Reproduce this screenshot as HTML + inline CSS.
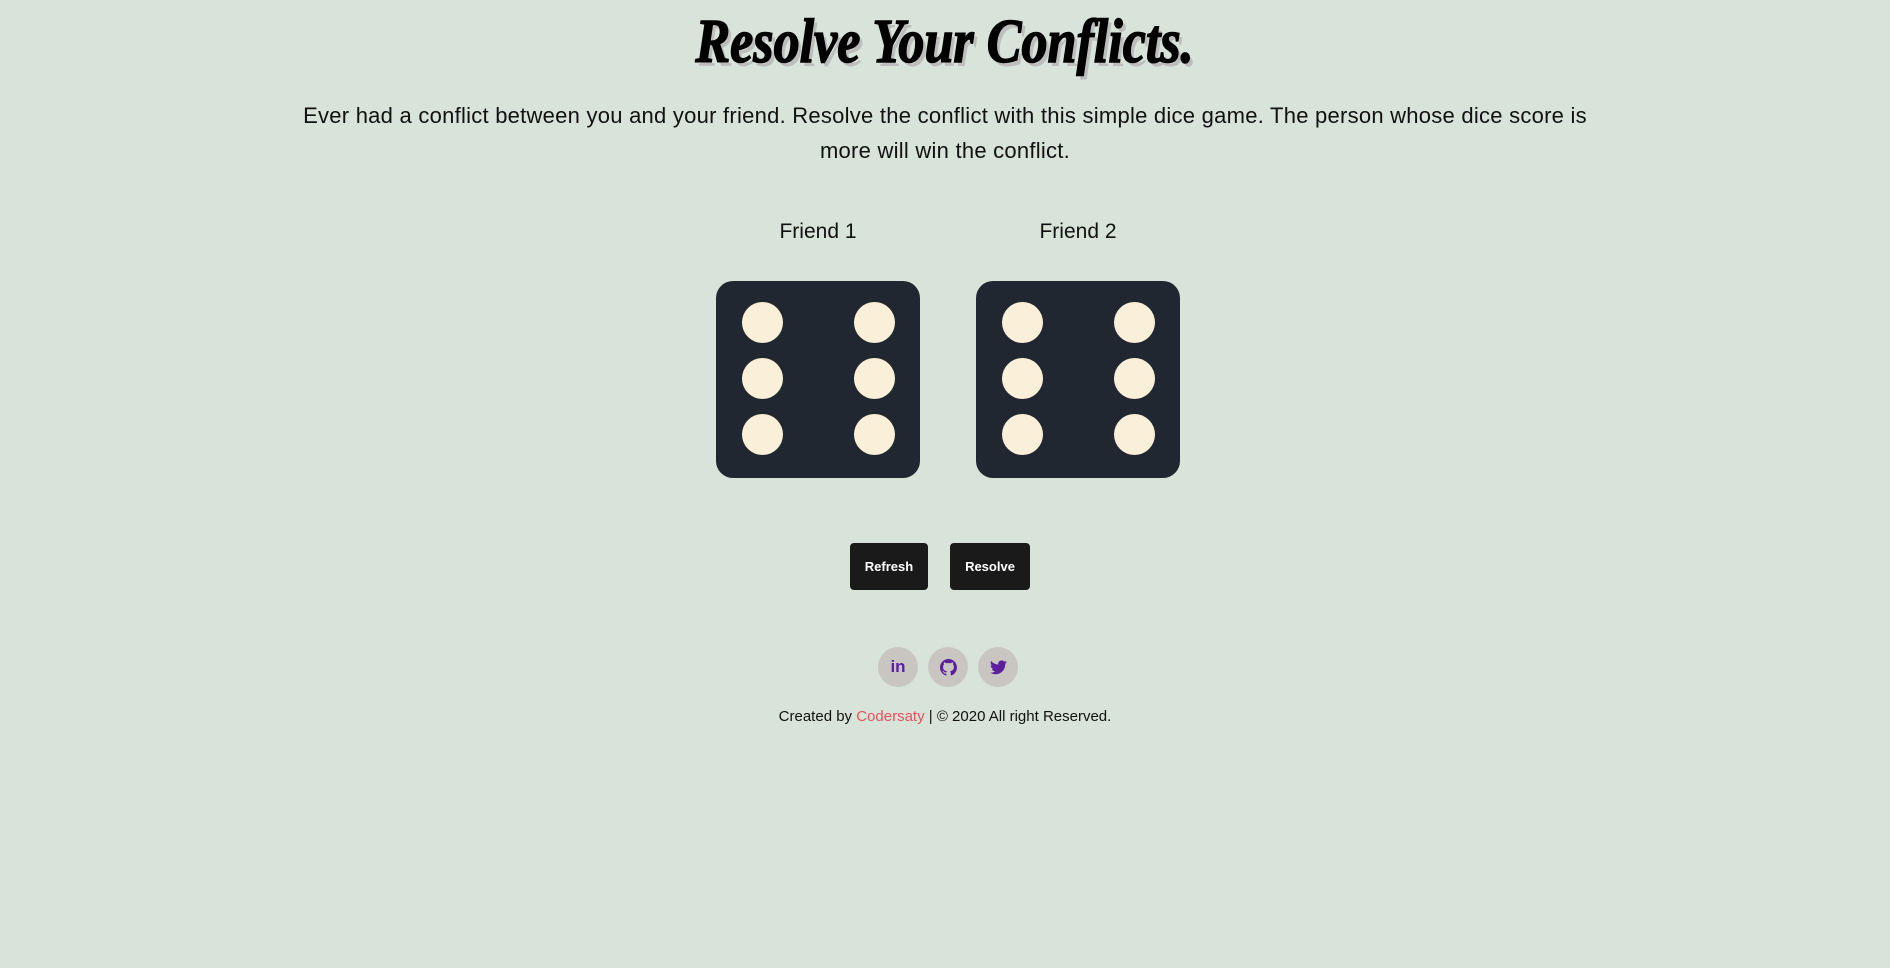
<!DOCTYPE html>
<html><head><meta charset="utf-8"><style>
body{margin:0;width:1890px;height:968px;background:#d8e3da;position:relative;overflow:hidden;font-family:"Liberation Sans",sans-serif;color:#111}
.abs{position:absolute}
h1{position:absolute;left:0;width:1890px;top:2px;margin:0;text-align:center;font-family:"Liberation Serif",serif;font-style:italic;font-weight:bold;font-size:62px;line-height:80px;color:#000;text-shadow:4px 4px 0 #bdbdbd;-webkit-text-stroke:1.5px #000}
h1 span{display:inline-block;transform:scaleX(0.84)}
.p{left:297px;width:1296px;top:98px;text-align:center;font-size:22px;line-height:35px;font-weight:300;letter-spacing:0.25px}
.lab{top:220px;width:200px;text-align:center;font-size:21px}
.die{top:281px;width:204px;height:197px;background:#212730;border-radius:17px}
.dot{position:absolute;width:41px;height:41px;border-radius:50%;background:#faefd8}
.btn{top:543px;height:47px;background:#1a1a1a;border-radius:4px;color:#fff;font-weight:bold;font-size:13px;line-height:47px;text-align:center}
.soc{top:647px;width:40px;height:40px;border-radius:50%;background:#c9c6c2;color:#5b1f9e;display:flex;align-items:center;justify-content:center;font-weight:bold;font-size:17px}
.foot{top:708px;left:0;width:1890px;text-align:center;font-size:15px}
</style></head><body>
<h1><span>Resolve Your Conflicts.</span></h1>
<div class="abs p">Ever had a conflict between you and your friend. Resolve the conflict with this simple dice game. The person whose dice score is more will win the conflict.</div>
<div class="abs lab" style="left:718px">Friend 1</div>
<div class="abs lab" style="left:978px">Friend 2</div>
<div class="abs die" style="left:716px">
<div class="dot" style="left:26px;top:21px"></div><div class="dot" style="left:138px;top:21px"></div>
<div class="dot" style="left:26px;top:77px"></div><div class="dot" style="left:138px;top:77px"></div>
<div class="dot" style="left:26px;top:133px"></div><div class="dot" style="left:138px;top:133px"></div>
</div>
<div class="abs die" style="left:976px">
<div class="dot" style="left:26px;top:21px"></div><div class="dot" style="left:138px;top:21px"></div>
<div class="dot" style="left:26px;top:77px"></div><div class="dot" style="left:138px;top:77px"></div>
<div class="dot" style="left:26px;top:133px"></div><div class="dot" style="left:138px;top:133px"></div>
</div>
<div class="abs btn" style="left:850px;width:78px">Refresh</div>
<div class="abs btn" style="left:950px;width:80px">Resolve</div>
<div class="abs soc" style="left:878px">in</div>
<div class="abs soc" style="left:928px"><svg width="17" height="17" viewBox="0 0 16 16"><path fill="#5b1f9e" d="M8 0a8 8 0 0 0-2.5 15.6c.4 0 .5-.2.5-.4v-1.5c-2.2.5-2.7-1-2.7-1-.4-.9-.9-1.2-.9-1.2-.7-.5.1-.5.1-.5.8.1 1.2.8 1.2.8.7 1.3 1.9.9 2.3.7.1-.5.3-.9.5-1.1-1.8-.2-3.6-.9-3.6-4 0-.9.3-1.6.8-2.1-.1-.2-.4-1 .1-2.1 0 0 .7-.2 2.2.8a7.4 7.4 0 0 1 4 0c1.5-1 2.2-.8 2.2-.8.4 1.1.2 1.9.1 2.1.5.6.8 1.3.8 2.1 0 3.1-1.9 3.800-3.600 4 .3.3.6.8.6 1.5v2.2c0 .2.1.5.6.4A8 8 0 0 0 8 0z"/></svg></div>
<div class="abs soc" style="left:978px"><svg width="17" height="15" viewBox="0 0 24 20"><path fill="#5b1f9e" d="M24 2.4a9.8 9.8 0 0 1-2.8.8A5 5 0 0 0 23.3.4a9.900 9.900 0 0 1-3.100 1.200A4.900 4.900 0 0 0 11.800 6 14 14 0 0 1 1.700.9a4.900 4.900 0 0 0 1.500 6.600 4.900 4.900 0 0 1-2.200-.6v.1a4.900 4.900 0 0 0 3.900 4.800 4.900 4.900 0 0 1-2.200.1 4.900 4.900 0 0 0 4.600 3.400A9.900 9.900 0 0 1 0 17.300 14 14 0 0 0 7.500 19.500c9.100 0 14-7.500 14-14v-.6A10 10 0 0 0 24 2.400z"/></svg></div>
<div class="abs foot">Created by <span style="color:#e8505b">Codersaty</span> | © 2020 All right Reserved.</div>
</body></html>
